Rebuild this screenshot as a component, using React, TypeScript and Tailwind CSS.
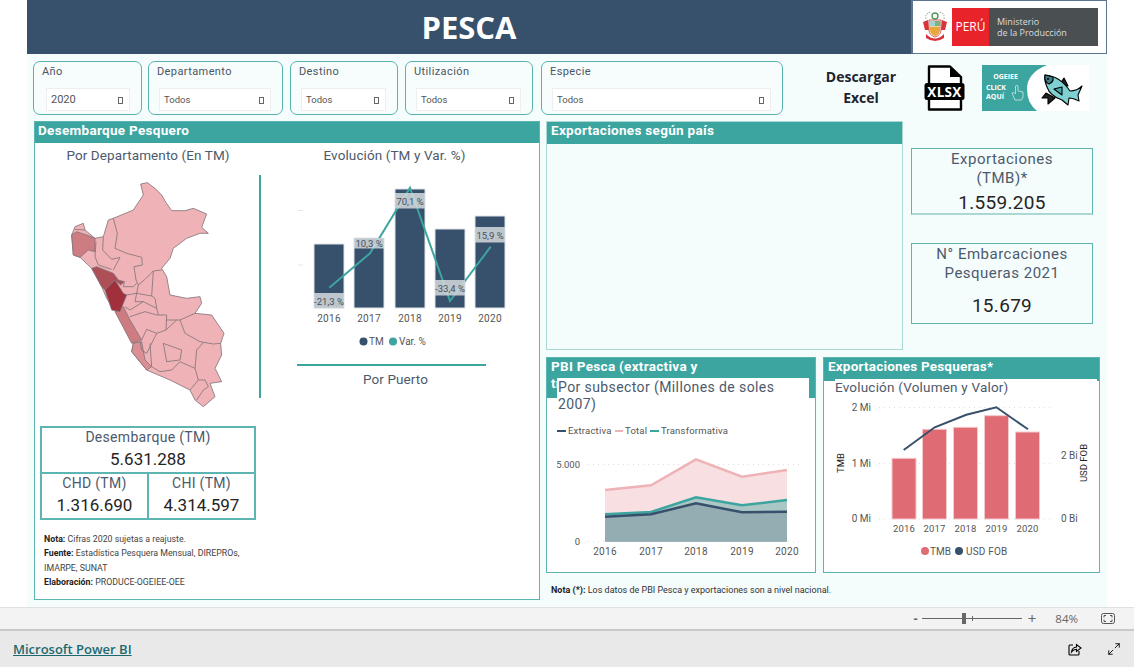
import { Maximize2 } from "lucide-react";

const NAVY = "#37506b";
const TEAL = "#3ca59f";

const filters = [
  { label: "Año", value: "2020", width: "w-[109px]", big: true },
  { label: "Departamento", value: "Todos", width: "ml-[6px] w-[135px]" },
  { label: "Destino", value: "Todos", width: "ml-[7px] w-[108px]" },
  { label: "Utilización", value: "Todos", width: "ml-[7px] w-[128px]" },
  { label: "Especie", value: "Todos", width: "ml-[8px] w-[242px]" },
];

function Slicer({ label, value, width, big }: { label: string; value: string; width: string; big?: boolean }) {
  return (
    <div className={`${width} h-[54px] shrink-0 rounded-[7px] border border-[#57b3ae] pl-[8px] pr-[11px] pt-[2px] bg-[#f7fdfd]`}>
      <div className="text-[11px] leading-[15px] tracking-[0.4px] text-[#4a5562]">{label}</div>
      <div className={`mt-[9px] h-[23px] pt-[2px] border border-[#eeeeee] bg-white flex items-center justify-between pr-[6px] text-[#555] ${big ? "ml-[4px] pl-[4px] text-[11px]" : "ml-[2px] pl-[4px] text-[9.5px]"}`}>
        {value}
        <span className="block w-[5px] h-[7px] border border-[#666]" />
      </div>
    </div>
  );
}

function PeruMap() {
  const outline =
    "M332 42 L352 38 L375 55 L395 75 L408 98 L425 122 L465 122 L490 115 L530 132 L515 172 L535 190 L510 190 L470 205 L430 235 L420 265 L395 295 L410 320 L420 375 L470 385 L510 380 L515 400 L495 430 L545 435 L582 490 L572 520 L575 555 L555 595 L575 635 L540 640 L555 680 L520 710 L495 690 L480 660 L420 630 L350 600 L305 545 L310 520 L260 430 L230 385 L215 350 L185 295 L150 262 L130 255 L125 195 L135 170 L160 160 L165 180 L195 205 L220 200 L235 150 L250 145 L310 120 L340 75 Z";
  const lines = [
    "M250 145 L262 190 L255 235 L290 250 L335 262 L337 285 L312 290 L318 330 L325 345 L345 328 L370 303 L395 300",
    "M220 200 L218 240 L245 268 L270 262 L250 300",
    "M198 215 L195 260 L205 285 L245 298",
    "M283 335 L280 350 L310 350 L320 340",
    "M325 345 L320 370 L365 378 L370 303",
    "M290 375 L320 370 L315 395 L340 395 L300 420 L285 410",
    "M365 378 L375 385 L380 415 L340 395",
    "M300 440 L345 425 L380 435 L410 435 L408 480 L380 490 L350 478 L335 510",
    "M380 415 L385 435 M408 450 L450 450 L495 430",
    "M450 450 L465 490 L510 515 L550 522 L572 520",
    "M408 480 L440 450",
    "M380 490 L350 550 L335 540 L330 515",
    "M400 520 L455 540 L450 570 L410 575 Z",
    "M360 520 L365 590 L390 605 L425 600 L450 575 L495 595 L500 540 L520 518",
    "M495 595 L505 630 L480 660",
    "M505 630 L525 630 L535 650 L520 660 L500 690",
    "M135 178 L165 180",
  ];
  const stroke = "#84747a";
  return (
    <svg width="230" height="240" viewBox="0 0 690 720" className="block">
      <path d={outline} fill="#efb3b7" stroke={stroke} strokeWidth="2.5" />
      <path d="M125 195 L140 185 L170 195 L195 205 L195 245 L175 240 L150 262 L130 255 Z" fill="#cd7c82" stroke={stroke} strokeWidth="2.5" />
      <path d="M305 545 L310 520 L335 515 L345 570 L365 590 L350 600 Z" fill="#d98f94" stroke={stroke} strokeWidth="2.5" />
      <path d="M255 425 L280 410 L300 450 L335 510 L305 520 Z" fill="#cd7c82" stroke={stroke} strokeWidth="2.5" />
      <path d="M185 295 L200 290 L250 310 L265 330 L283 335 L272 345 L255 330 L225 360 L215 350 Z" fill="#ae4f58" stroke={stroke} strokeWidth="2.5" />
      <path d="M225 360 L255 330 L280 370 L290 375 L280 400 L270 425 L245 420 Z" fill="#a0303c" stroke={stroke} strokeWidth="2.5" />
      {lines.map((d) => (
        <path key={d} d={d} fill="none" stroke={stroke} strokeWidth="2.5" />
      ))}
    </svg>
  );
}

function EvolucionChart() {
  const bars = [
    { x: 314, top: 244, year: "2016", label: "-21,3 %", ly: 293 },
    { x: 354, top: 238, year: "2017", label: "10,3 %", ly: 238 },
    { x: 395, top: 189, year: "2018", label: "70,1 %", ly: 193 },
    { x: 435, top: 229, year: "2019", label: "-33,4 %", ly: 280 },
    { x: 475, top: 216, year: "2020", label: "15,9 %", ly: 227 },
  ];
  return (
    <svg width="240" height="190" viewBox="280 170 240 190" className="block font-[Roboto]">
      <path d="M298 210.5 H303 M298 265 H303" stroke="#e6e6e6" />
      {bars.map((b) => (
        <rect key={b.x} x={b.x} y={b.top} width="30" height={308 - b.top} fill={NAVY} stroke="#dfe3e8" strokeWidth="1" />
      ))}
      <polyline points="329.3,287.7 370,253.3 410,187.7 450,301 490.7,246.7" fill="none" stroke={TEAL} strokeWidth="2" />
      {bars.map((b) => (
        <g key={b.year}>
          <rect x={b.x} y={b.ly} width="30" height={b.year === "2017" ? 10.5 : 15.5} fill="#d5dade" opacity="0.85" />
          <text x={b.x + 15} y={b.ly + (b.year === "2017" ? 9 : 12)} textAnchor="middle" fontSize="9.5" fill="#47505a">{b.label}</text>
          <text x={b.x + 15} y="322" textAnchor="middle" fontSize="10" letterSpacing="0.3" fill="#555">{b.year}</text>
        </g>
      ))}
      <circle cx="363.5" cy="341.5" r="4" fill={NAVY} />
      <text x="369" y="345" fontSize="10" fill="#555">TM</text>
      <circle cx="393" cy="341.5" r="4" fill={TEAL} />
      <text x="399" y="345" fontSize="10" fill="#555">Var. %</text>
    </svg>
  );
}

function PbiChart() {
  const xs = [605, 651, 696, 742, 787];
  const total = [490, 485.3, 459.3, 476.7, 470];
  const trans = [514.3, 512, 497.3, 505.3, 500];
  const extr = [516.7, 514.3, 503.3, 512.3, 511.7];
  const pts = (ys: number[]) => xs.map((x, i) => `${x},${ys[i]}`).join(" ");
  const area = (ys: number[]) => `605,541.7 ${pts(ys)} 787,541.7`;
  return (
    <svg width="252" height="145" viewBox="557 415 252 145" className="block font-[Roboto]">
      <path d="M557 431 H566" stroke={NAVY} strokeWidth="2" />
      <text x="568" y="434" fontSize="9.5" fill="#555" letterSpacing="0.2">Extractiva</text>
      <path d="M615 431 H623" stroke="#efb3b7" strokeWidth="2" />
      <text x="625" y="434" fontSize="9.5" fill="#555" letterSpacing="0.2">Total</text>
      <path d="M650 431 H659" stroke={TEAL} strokeWidth="2" />
      <text x="661" y="434" fontSize="9.5" fill="#555" letterSpacing="0.2">Transformativa</text>
      <path d="M588 464.5 H802 M588 541.7 H802" stroke="#ddd" strokeDasharray="1 4" />
      <polygon points={area(total)} fill="#f8dfe1" />
      <polygon points={area(trans)} fill="#aac7c5" />
      <polygon points={area(extr)} fill="#93adb2" />
      <polyline points={pts(total)} fill="none" stroke="#efb3b7" strokeWidth="2.5" />
      <polyline points={pts(trans)} fill="none" stroke={TEAL} strokeWidth="2.5" />
      <polyline points={pts(extr)} fill="none" stroke={NAVY} strokeWidth="2.5" />
      <text x="580" y="468" textAnchor="end" fontSize="9.5" fill="#555">5.000</text>
      <text x="580" y="545" textAnchor="end" fontSize="9.5" fill="#555">0</text>
      {xs.map((x, i) => (
        <text key={x} x={x} y="555" textAnchor="middle" fontSize="10" letterSpacing="0.3" fill="#555">{2016 + i}</text>
      ))}
    </svg>
  );
}

function ExportChart() {
  const bars = [
    { x: 889, top: 458.3 },
    { x: 919.5, top: 429.3 },
    { x: 950.5, top: 427.3 },
    { x: 981.5, top: 415.7 },
    { x: 1012.5, top: 432 },
  ];
  return (
    <svg width="262" height="165" viewBox="832 397 262 165" className="block font-[Roboto]">
      <path d="M876 407.5 H1050 M876 463.5 H1050 M876 519 H1050" stroke="#ddd" strokeDasharray="1 4" />
      {bars.map((b, i) => (
        <g key={b.x}>
          <rect x={b.x} y={b.top} width="24" height={519 - b.top} fill="#df6b74" stroke="#f5c9cc" strokeWidth="1" />
          <text x={b.x + 12} y="531.5" textAnchor="middle" fontSize="9.5" letterSpacing="0.2" fill="#555">{2016 + i}</text>
        </g>
      ))}
      <polyline points="900.7,450 931.7,427.3 963.3,414.7 993.3,407.3 1025,429.3" fill="none" stroke={NAVY} strokeWidth="2" />
      <text x="868" y="411" textAnchor="end" fontSize="10" fill="#555">2 Mi</text>
      <text x="868" y="467" textAnchor="end" fontSize="10" fill="#555">1 Mi</text>
      <text x="868" y="522" textAnchor="end" fontSize="10" fill="#555">0 Mi</text>
      <text x="1058" y="459" fontSize="10" fill="#555">2 Bi</text>
      <text x="1058" y="522" fontSize="10" fill="#555">0 Bi</text>
      <text transform="translate(841 463) rotate(-90)" textAnchor="middle" fontSize="9.5" fill="#222">TMB</text>
      <text transform="translate(1084 463) rotate(-90)" textAnchor="middle" fontSize="9.5" fill="#222">USD FOB</text>
      <circle cx="922" cy="551" r="4" fill="#df6b74" />
      <text x="927" y="554.5" fontSize="10" fill="#555">TMB</text>
      <circle cx="956" cy="551" r="4" fill={NAVY} />
      <text x="963" y="554.5" fontSize="10" letterSpacing="0.2" fill="#555">USD FOB</text>
    </svg>
  );
}

function Escudo() {
  return (
    <svg width="26" height="34" viewBox="0 0 26 34" className="shrink-0">
      <path d="M4 9 Q3 3 9 2 M22 9 Q23 3 17 2" fill="none" stroke="#b9b9b9" strokeWidth="1.2" strokeDasharray="1.5 1" />
      <circle cx="13" cy="6" r="3" fill="none" stroke="#4d9c5a" strokeWidth="1.4" />
      <path d="M1 12 L6 10 L7 20 L3 20 Z M25 12 L20 10 L19 20 L23 20 Z" fill="#d9333a" />
      <path d="M7 10 H19 V20 Q19 25 13 27 Q7 25 7 20 Z" fill="#fff" stroke="#c33" strokeWidth="0.8" />
      <path d="M7.5 11 H13 V16 H7.5 Z" fill="#9fd3d0" />
      <path d="M13 11 H18.5 V16 H13 Z" fill="#7fb27f" />
      <path d="M8 16.5 H18 V20 Q18 24 13 26 Q8 24 8 20 Z" fill="#e9a63a" />
      <path d="M4 24 Q13 33 22 24 L22 28 Q13 34 4 28 Z" fill="#d9333a" />
    </svg>
  );
}

function XlsxIcon() {
  return (
    <svg width="42" height="46" viewBox="0 0 42 46" className="block">
      <path d="M5 1.5 H26 L37 12 V44.5 H5 Z" fill="#fff" stroke="#000" strokeWidth="2.4" strokeLinejoin="round" />
      <path d="M26 1.5 V12 H37 Z" fill="#000" />
      <rect x="0.5" y="18" width="40" height="17" rx="2.5" fill="#000" />
      <text x="20.5" y="31.5" textAnchor="middle" fontSize="13.5" fontWeight="700" letterSpacing="0.3" fill="#fff" fontFamily="'Open Sans', sans-serif">XLSX</text>
    </svg>
  );
}

function OgeieeBanner() {
  return (
    <svg width="107" height="46" viewBox="0 0 107 46" className="block font-['Open_Sans',sans-serif]">
      <rect width="107" height="46" fill={TEAL} />
      <path d="M65 0 Q45 8 45 24 Q45 38 55 46 H107 V0 Z" fill="#fff" />
      <text x="23.5" y="13.5" textAnchor="middle" fontSize="7" fontWeight="700" fill="#fff">OGEIEE</text>
      <text x="4" y="25" fontSize="7" fontWeight="700" fill="#fff">CLICK</text>
      <text x="4" y="33.5" fontSize="7" fontWeight="700" fill="#fff">AQUÍ</text>
      <path d="M33 35 L30 28 L32 27.5 L33.5 29 V21 Q35 19.5 36 21 V26 L41 27 V32 L39.5 35 Z" fill="none" stroke="#cfe9e7" strokeWidth="0.8" />
      <g stroke="#000" strokeWidth="1.1" strokeLinejoin="round">
        <path d="M78 19 L82 13 L86 21 Z" fill="#222" />
        <path d="M64 28 L60 33 L66 33 L66 39 L73 33 Z" fill="#222" />
        <path d="M63 10 Q78 11 88 26 Q95 26 100 21 L96 30 L97 36 Q91 33 87 33 L86 40 L80 35 Q68 31 65 22 Q62 15 63 10 Z" fill="#7ed0d2" />
        <path d="M63 10 Q62 17 67 19 Q72 17 71 12 Z" fill="#3f7f88" />
        <path d="M72 24 L80 30 L80 22 Z" fill="#4fa5a8" />
      </g>
      <circle cx="66" cy="14" r="1" fill="#000" />
    </svg>
  );
}

function Kpi({ title, value, className }: { title: string; value: string; className: string }) {
  return (
    <div className={`flex flex-col items-center border-[#5cb5b0] ${className}`}>
      <div className="text-[14px] leading-[18px] tracking-[0.3px] text-[#4c5a6c]">{title}</div>
      <div className="text-[17px] leading-[24px] text-[#252423] mt-[1px]">{value}</div>
    </div>
  );
}

export default function App() {
  return (
    <div className="w-[1134px] h-[667px] overflow-hidden bg-white flex flex-col font-[Roboto,sans-serif]">
      <div className="h-[607px] pl-[27px] shrink-0">
        <div className="w-[1080px] h-full bg-[#f5fcfc]">
          {/* header */}
          <div className="h-[54px] flex" style={{ backgroundColor: NAVY }}>
            <div className="w-[884px] flex items-center justify-center text-white font-bold text-[31px] font-['Open_Sans',sans-serif]">PESCA</div>
            <div className="w-[196px] h-[54px] border border-[#5d7690] border-l-2 bg-white flex items-center pl-[9px]">
              <Escudo />
              <div className="ml-[4px] w-[37px] h-[38px] bg-[#e8232a] flex items-center justify-center text-white text-[12px] font-['Open_Sans',sans-serif]">PERÚ</div>
              <div className="w-[109px] h-[38px] bg-[#4a4f52] pl-[8px] flex flex-col justify-center text-[#dcdcdc] text-[9px] leading-[11px] font-['Open_Sans',sans-serif]">
                <span>Ministerio</span>
                <span>de la Producción</span>
              </div>
            </div>
          </div>

          {/* slicers */}
          <div className="flex mt-[7px] pl-[6px] h-[54px]">
            <div className="flex w-[751px]">
              {filters.map((f) => (
                <Slicer key={f.label} {...f} />
              ))}
            </div>
            <div className="w-[140px] text-center pl-[14px] text-[14px] leading-[21px] font-bold text-[#1d2430] font-['Open_Sans',sans-serif] pt-[5px]">
              Descargar<br />Excel
            </div>
            <div className="mt-[4px] w-[58px]"><XlsxIcon /></div>
            <div className="mt-[4px]"><OgeieeBanner /></div>
          </div>

          {/* body */}
          <div className="flex mt-[6px] pl-[7px] gap-[6px]">
            {/* Desembarque */}
            <div className="w-[506px] h-[479px] border border-[#5cb5b0] bg-white">
              <div className="h-[21px] pl-[3px] text-white font-bold text-[13.5px] leading-[16px] tracking-[0.3px]" style={{ backgroundColor: TEAL }}>Desembarque Pesquero</div>
              <div className="flex h-[281px]">
                <div className="w-[224px] shrink-0">
                  <div className="text-center pl-[2px] text-[13.5px] leading-[18px] tracking-[0.1px] text-[#4c5a6c] mt-[3px] h-[24px]">Por Departamento (En TM)</div>
                  <div className="-ml-[5px]"><PeruMap /></div>
                </div>
                <div className="w-[2px] h-[223px] mt-[32px] shrink-0" style={{ backgroundColor: TEAL }} />
                <div className="flex-1">
                  <div className="w-[240px] ml-[19px]">
                    <div className="text-center text-[13.5px] leading-[18px] tracking-[0.1px] text-[#4c5a6c] mt-[3px] h-[24px] -ml-[11px]">Evolución (TM y Var. %)</div>
                    <EvolucionChart />
                    <div className="w-[189px] h-[2px] mt-[4px] ml-[17px]" style={{ backgroundColor: TEAL }} />
                    <div className="w-[189px] ml-[21px] text-center text-[13.5px] leading-[18px] tracking-[0.1px] text-[#4c5a6c] mt-[4px]">Por Puerto</div>
                  </div>
                </div>
              </div>
              <div className="ml-[5px] w-[216px] mt-[2px] border-2 border-[#5cb5b0]">
                <Kpi title="Desembarque (TM)" value="5.631.288" className="h-[46px] border-b-2" />
                <div className="flex">
                  <Kpi title="CHD (TM)" value="1.316.690" className="w-[107px] h-[44px] border-r-2" />
                  <Kpi title="CHI (TM)" value="4.314.597" className="flex-1 h-[44px]" />
                </div>
              </div>
              <div className="ml-[9px] mt-[12px] w-[210px] text-[8.8px] leading-[14.4px] text-[#444]">
                <div><b className="text-[#222]">Nota:</b> Cifras 2020 sujetas a reajuste.</div>
                <div><b className="text-[#222]">Fuente:</b> Estadística Pesquera Mensual, DIREPROs, IMARPE, SUNAT</div>
                <div><b className="text-[#222]">Elaboración:</b> PRODUCE-OGEIEE-OEE</div>
              </div>
            </div>

            {/* right column */}
            <div className="w-[554px]">
              <div className="flex h-[229px] gap-[8px]">
                <div className="w-[357px] border border-[#a9d8d5]">
                  <div className="h-[22px] pl-[4px] text-white font-bold text-[13.5px] leading-[16px] tracking-[0.3px]" style={{ backgroundColor: TEAL }}>Exportaciones según país</div>
                </div>
                <div className="w-[182px] pt-[27px] flex flex-col gap-[28px] text-center">
                  <div className="h-[67px] border border-[#5cb5b0] border-b-2 border-b-[#a9d8d5] flex flex-col items-center pt-[1px]">
                    <div className="text-[15px] leading-[19px] tracking-[0.5px] text-[#4c5a6c]">Exportaciones<br />(TMB)*</div>
                    <div className="text-[19px] leading-[26px] tracking-[0.3px] text-[#252423] mt-[2px]">1.559.205</div>
                  </div>
                  <div className="h-[81px] border border-[#5cb5b0] flex flex-col items-center pt-[1px]">
                    <div className="text-[15px] leading-[19px] tracking-[0.5px] text-[#4c5a6c]">N° Embarcaciones<br />Pesqueras 2021</div>
                    <div className="text-[19px] leading-[26px] tracking-[0.3px] text-[#252423] mt-[10px]">15.679</div>
                  </div>
                </div>
              </div>

              <div className="flex mt-[7px] gap-[7px]">
                <div className="w-[270px] h-[216px] border border-[#5cb5b0] bg-white">
                  <div className="h-[40px] pl-[4px] text-white font-bold text-[13.5px] leading-[17px] tracking-[0.3px] overflow-hidden" style={{ backgroundColor: TEAL }}>
                    <div className="w-[170px]">PBI Pesca (extractiva y transformativa)</div>
                  </div>
                  <div className="relative -mt-[20px] ml-[10px] w-[252px] bg-white">
                    <div className="text-[14px] leading-[17px] tracking-[0.4px] text-[#4c5a6c] pt-[1px] pl-[1px] h-[37px]">Por subsector (Millones de soles 2007)</div>
                    <PbiChart />
                  </div>
                </div>
                <div className="w-[277px] h-[216px] border border-[#5cb5b0] bg-white">
                  <div className="h-[23px] pl-[4px] text-white font-bold text-[13.5px] leading-[17px] tracking-[0.2px]" style={{ backgroundColor: TEAL }}>Exportaciones Pesqueras*</div>
                  <div className="relative -mt-[2px] ml-[11px] w-[262px] bg-white">
                    <div className="text-[13.5px] leading-[17px] tracking-[0.2px] text-[#4c5a6c] h-[18px]">Evolución (Volumen y Valor)</div>
                    <ExportChart />
                  </div>
                </div>
              </div>
              <div className="mt-[11px] ml-[5px] text-[9px] leading-[12px] text-[#333]"><b className="text-[#222]">Nota (*):</b> Los datos de PBI Pesca y exportaciones son a nivel nacional.</div>
            </div>
          </div>
        </div>
      </div>

      {/* zoom bar */}
      <div className="h-[24px] shrink-0 bg-[#f3f3f3] border-t border-t-[#e0e0e0] border-b-2 border-b-[#c8c8c8] flex items-center justify-end font-['Open_Sans',sans-serif] text-[#666]">
        <span className="text-[13px] font-bold leading-none mr-[4px]">-</span>
        <div className="relative w-[100px] h-[1px] bg-[#666]">
          <span className="absolute left-[40px] -top-[5px] w-[4px] h-[11px] bg-[#666]" />
          <span className="absolute left-[50px] -top-[2px] w-[1px] h-[5px] bg-[#666]" />
        </div>
        <span className="text-[15px] leading-none ml-[6px]">+</span>
        <span className="text-[11.5px] ml-[19px] mr-[23px]">84%</span>
        <svg width="14" height="11" viewBox="0 0 14 11" fill="none" stroke="#555" className="mr-[19px]">
          <rect x="0.5" y="0.5" width="13" height="10" rx="2" />
          <path d="M3 4.5 V2.5 H5 M9 2.5 H11 V4.5 M3 6.5 V8.5 H5 M9 8.5 H11 V6.5" />
        </svg>
      </div>

      {/* footer */}
      <div className="flex-1 bg-[#e9e9e9] flex items-center pl-[13px] pr-[13px]">
        <span className="text-[13px] font-semibold underline text-[#1c6a6f] font-['Open_Sans',sans-serif] mt-[1px]">Microsoft Power BI</span>
        <svg width="15" height="15" viewBox="0 0 15 15" fill="none" stroke="#000" strokeWidth="1.1" className="ml-auto">
          <path d="M6 3 H3 Q2 3 2 4 V12 Q2 13 3 13 H11 Q12 13 12 12 V9" />
          <path d="M4.5 10 Q5 5.5 9.5 5 V2.5 L14 6 L9.5 9.5 V7.2 Q6.5 7.2 4.5 10 Z" />
        </svg>
        <Maximize2 size={14} className="ml-[25px] text-black" strokeWidth={1.5} />
      </div>
    </div>
  );
}
